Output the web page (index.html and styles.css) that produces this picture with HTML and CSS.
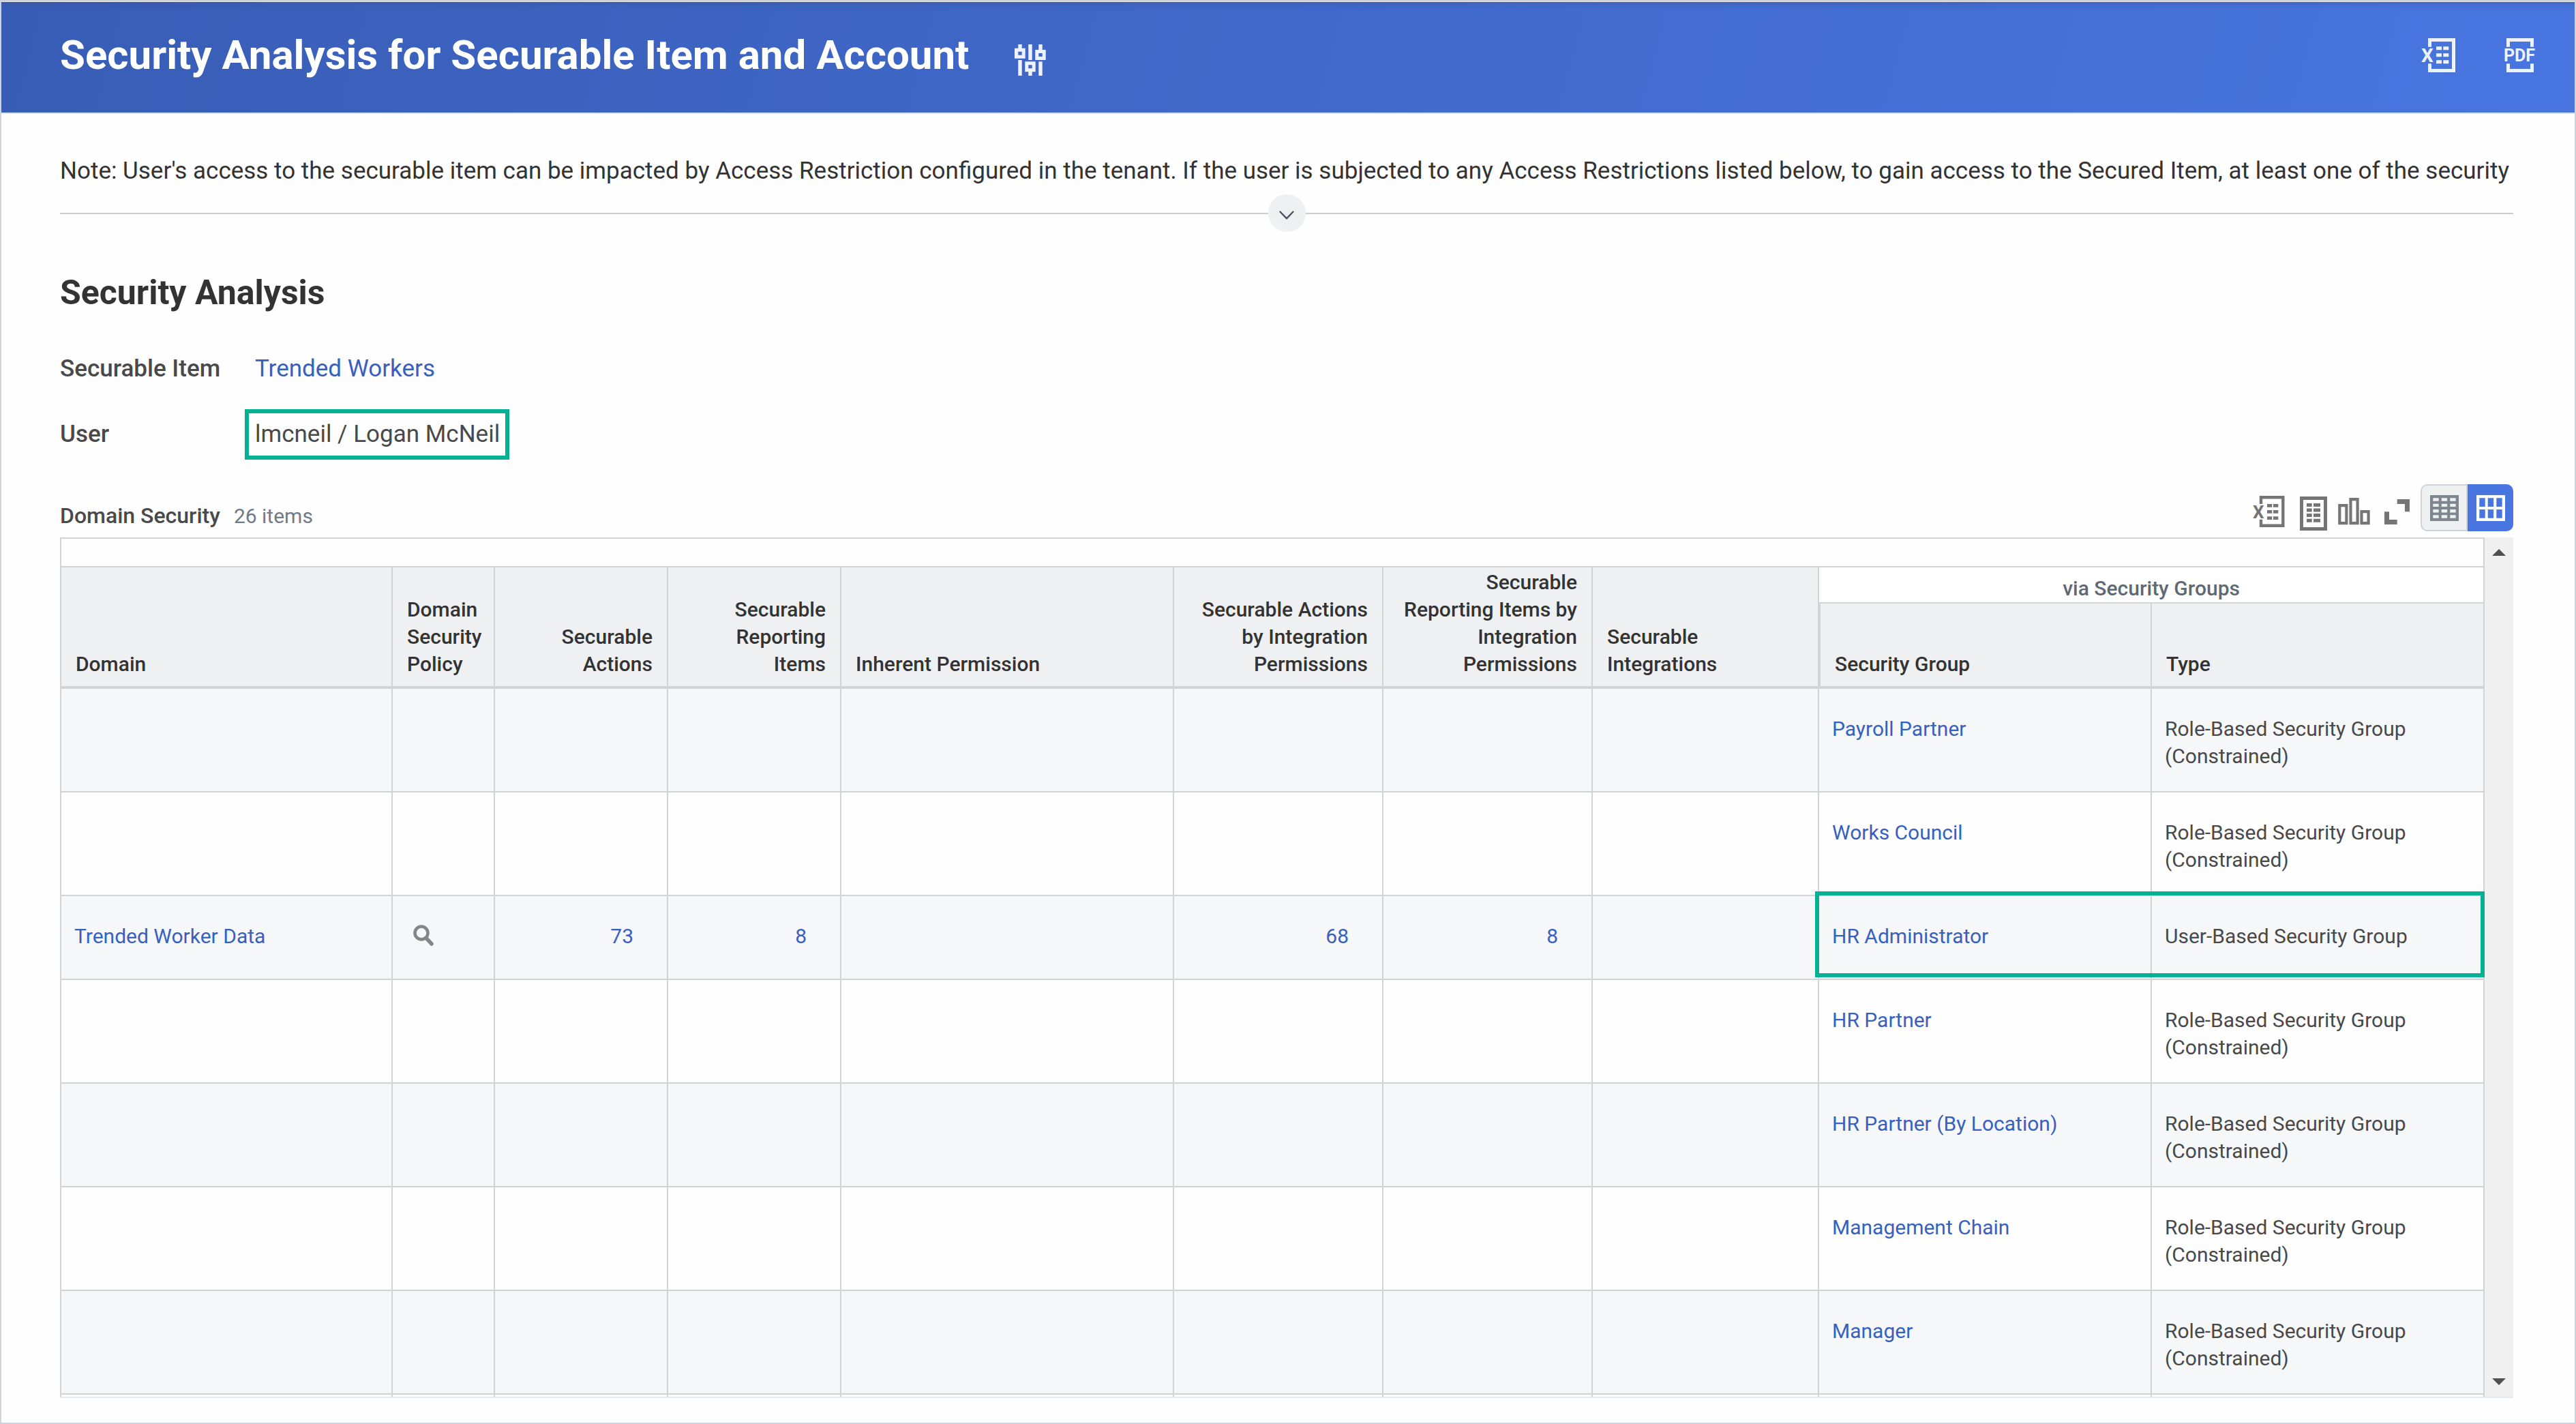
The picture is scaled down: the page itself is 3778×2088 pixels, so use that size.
FILE: index.html
```html
<!DOCTYPE html>
<html lang="en">
<head>
<meta charset="utf-8">
<title>Security Analysis for Securable Item and Account</title>
<link rel="stylesheet" href="styles.css">
</head>
<body>
<div class="page">
  <header class="page-header">
    <h1 class="page-title">Security Analysis for Securable Item and Account</h1>
    <button class="icon-button settings" type="button" aria-label="Configure">
      <svg width="46" height="46" viewBox="0 0 46 46" fill="currentColor" fill-rule="evenodd">
        <path d="M5.3 0h5.4v5.7h5v15H0v-15h5.300zM5.300 10.700v5h5.400v-5zM5.300 23h5.400v23H5.300z"/>
        <path d="M20.300 0h5.400v23h-5.400zM15.300 25.300h15.400v15h-5V46h-5.400v-5.700h-5zM20.300 30.300v5h5.400v-5z"/>
        <path d="M35.300 0h5.400v8h5v15H30.300V8h5zM35.300 13v5h5.400v-5zM35.300 25.300h5.400V46h-5.400z"/>
      </svg>
    </button>
    <div class="export-actions">
      <button class="icon-button" type="button" aria-label="Export to Excel">
        <svg width="50" height="50" viewBox="0 0 50 50" fill="currentColor">
          <path d="M12.500 12.700V2.500H47.500V47.500H12.500V37.300" fill="none" stroke="currentColor" stroke-width="5"/>
          <path d="M22 12.300h8v5h-8zM32.300 12.300h8v5h-8zM22 22.300h8v5h-8zM32.300 22.300h8v5h-8zM22 32.300h8v5h-8zM32.300 32.300h8v5h-8z"/>
          <text x="0" y="35" font-size="28" font-weight="700">X</text>
        </svg>
      </button>
      <button class="icon-button" type="button" aria-label="Export to PDF">
        <svg width="46" height="50" viewBox="0 0 46 50" fill="currentColor">
          <path d="M5.500 12.700V2.500H40.500V12.700M5.500 37.300V47.500H40.500V37.300" fill="none" stroke="currentColor" stroke-width="5"/>
          <text x="-1" y="34" font-size="25" font-weight="700">PDF</text>
        </svg>
      </button>
    </div>
  </header>

  <main class="content">
    <p class="note">Note: User's access to the securable item can be impacted by Access Restriction configured in the tenant. If the user is subjected to any Access Restrictions listed below, to gain access to the Secured Item, at least one of the security</p>
    <div class="expander">
      <button class="expand-button" type="button" aria-label="Show more">
        <svg width="22" height="13" viewBox="0 0 22 13" fill="none" stroke="currentColor" stroke-width="2.400" stroke-linecap="round" stroke-linejoin="round"><path d="M1.500 1.500 11 11.300 20.500 1.500"/></svg>
      </button>
    </div>

    <h2 class="section-title">Security Analysis</h2>
    <dl class="fields">
      <dt>Securable Item</dt>
      <dd><a class="field-value" href="#trended-workers">Trended Workers</a></dd>
      <dt>User</dt>
      <dd><span class="field-value marked">lmcneil / Logan McNeil</span></dd>
    </dl>

    <div class="grid-bar">
      <h3 class="grid-title" id="grid-title">Domain Security</h3>
      <span class="grid-count">26 items</span>
      <div class="tools">
        <button class="icon-button" type="button" aria-label="Export grid to Excel">
          <svg width="62" height="52" viewBox="0 0 62 52" fill="currentColor">
            <path d="M14 12V2.300H46.300V43.800H14V34.700" fill="none" stroke="currentColor" stroke-width="4.400"/>
            <path d="M23 12h7.300v4.700H23zM32 12h7.300v4.700H32zM23 21h7.300v4.700H23zM32 21h7.300v4.700H32zM23 30.300h7.300v4.700H23zM32 30.300h7.300v4.700H32z"/>
            <text x="2" y="33" font-size="26" font-weight="700">X</text>
          </svg>
        </button>
        <button class="icon-button" type="button" aria-label="View as worksheet">
          <svg width="62" height="52" viewBox="0 0 62 52" fill="currentColor">
            <path d="M11.500 3.500h35v45h-35z" fill="none" stroke="currentColor" stroke-width="5"/>
            <path d="M19 11h7.700v5H19zM29 11h10v5H29zM19 18.500h7.700v5H19zM29 18.500h10v5H29zM19 26h7.700v5H19zM29 26h10v5H29zM19 33.700h7.700v5H19zM29 33.700h10v5H29z"/>
          </svg>
        </button>
        <button class="icon-button" type="button" aria-label="View as chart">
          <svg width="62" height="52" viewBox="0 0 62 52" fill="none" stroke="currentColor" stroke-width="4.200">
            <path d="M5.300 14.100h10.100v26H5.300zM21.500 5.100h10.100v35H21.500zM37.500 23.100h10.100v17H37.500z"/>
          </svg>
        </button>
        <button class="icon-button" type="button" aria-label="Full screen">
          <svg width="62" height="52" viewBox="0 0 62 52" fill="currentColor">
            <path d="M27.700 5H46v18.300h-7V12H27.700zM9 23.300h7V35h11.700v7H9z"/>
          </svg>
        </button>
      </div>
      <div class="view-toggle">
        <button class="toggle" type="button" aria-label="Compact view" aria-pressed="false">
          <svg width="42" height="38" viewBox="0 0 42 38" fill="currentColor" fill-rule="evenodd">
            <path d="M0 0H42V38H0zM4.300 4.300v4.400h8.400V4.300zM16.700 4.300v4.400h8.400V4.300zM29.300 4.300v4.400h8.400V4.300zM4.300 12.700v4.400h8.400v-4.400zM16.700 12.700v4.400h8.400v-4.400zM29.300 12.700v4.400h8.400v-4.400zM4.300 21v4.400h8.400V21zM16.700 21v4.400h8.400V21zM29.300 21v4.400h8.400V21zM4.300 29.300v4.400h8.400v-4.400zM16.700 29.300v4.400h8.400v-4.400zM29.300 29.300v4.400h8.400v-4.400z"/>
          </svg>
        </button>
        <button class="toggle active" type="button" aria-label="Expanded view" aria-pressed="true">
          <svg width="42" height="38" viewBox="0 0 42 38" fill="currentColor" fill-rule="evenodd">
            <path d="M0 0H42V38H0zM4.300 4.300V17h8.400V4.300zM16.700 4.300V17h8.400V4.300zM29.300 4.300V17h8.400V4.300zM4.300 21v12.700h8.400V21zM16.700 21v12.700h8.400V21zM29.300 21v12.700h8.400V21z"/>
          </svg>
        </button>
      </div>
    </div>

    <div class="grid">
      <div class="grid-view">
        <table class="grid-table" aria-labelledby="grid-title">
          <colgroup>
            <col class="col-domain"><col class="col-policy"><col class="col-count"><col class="col-count"><col class="col-wide">
            <col class="col-perm"><col class="col-perm"><col class="col-integrations"><col class="col-wide"><col class="col-wide">
          </colgroup>
          <thead>
            <tr class="spacer"><td colspan="10"></td></tr>
            <tr class="group-row">
              <th rowspan="2" scope="col">Domain</th>
              <th rowspan="2" scope="col">Domain Security Policy</th>
              <th rowspan="2" scope="col" class="num">Securable Actions</th>
              <th rowspan="2" scope="col" class="num">Securable Reporting Items</th>
              <th rowspan="2" scope="col">Inherent Permission</th>
              <th rowspan="2" scope="col" class="num">Securable Actions by Integration Permissions</th>
              <th rowspan="2" scope="col" class="num">Securable Reporting Items by Integration Permissions</th>
              <th rowspan="2" scope="col">Securable Integrations</th>
              <th colspan="2" scope="colgroup" class="group">via Security Groups</th>
            </tr>
            <tr class="sub-row">
              <th scope="col" class="first-sub">Security Group</th>
              <th scope="col">Type</th>
            </tr>
          </thead>
          <tbody>
            <tr><td></td><td></td><td></td><td></td><td></td><td></td><td></td><td></td><td><a href="#payroll-partner">Payroll Partner</a></td><td>Role-Based Security Group (Constrained)</td></tr>
            <tr><td></td><td></td><td></td><td></td><td></td><td></td><td></td><td></td><td><a href="#works-council">Works Council</a></td><td>Role-Based Security Group (Constrained)</td></tr>
            <tr class="single">
              <td><a href="#trended-worker-data">Trended Worker Data</a></td>
              <td>
                <button class="icon-button lookup" type="button" aria-label="View policy">
                  <svg width="30" height="32" viewBox="0 0 30 32" fill="none" stroke="currentColor"><circle cx="12" cy="12" r="9.500" stroke-width="4.600"/><path d="M19 19.500 27 28" stroke-width="5.500" stroke-linecap="round"/></svg>
                </button>
              </td>
              <td class="num"><a href="#actions">73</a></td>
              <td class="num"><a href="#reporting-items">8</a></td>
              <td></td>
              <td class="num"><a href="#integration-actions">68</a></td>
              <td class="num"><a href="#integration-items">8</a></td>
              <td></td>
              <td class="mark-start"><a href="#hr-administrator">HR Administrator</a></td>
              <td class="mark-end">User-Based Security Group</td>
            </tr>
            <tr><td></td><td></td><td></td><td></td><td></td><td></td><td></td><td></td><td><a href="#hr-partner">HR Partner</a></td><td>Role-Based Security Group (Constrained)</td></tr>
            <tr><td></td><td></td><td></td><td></td><td></td><td></td><td></td><td></td><td><a href="#hr-partner-location">HR Partner (By Location)</a></td><td>Role-Based Security Group (Constrained)</td></tr>
            <tr><td></td><td></td><td></td><td></td><td></td><td></td><td></td><td></td><td><a href="#management-chain">Management Chain</a></td><td>Role-Based Security Group (Constrained)</td></tr>
            <tr><td></td><td></td><td></td><td></td><td></td><td></td><td></td><td></td><td><a href="#manager">Manager</a></td><td>Role-Based Security Group (Constrained)</td></tr>
            <tr><td></td><td></td><td></td><td></td><td></td><td></td><td></td><td></td><td></td><td></td></tr>
          </tbody>
        </table>
      </div>
      <div class="scrollbar">
        <button class="scroll-button" type="button" aria-label="Scroll up"><svg width="20" height="10" viewBox="0 0 20 10" fill="currentColor"><path d="M10 0 20 10H0z"/></svg></button>
        <button class="scroll-button" type="button" aria-label="Scroll down"><svg width="20" height="10" viewBox="0 0 20 10" fill="currentColor"><path d="M0 0H20L10 10z"/></svg></button>
      </div>
    </div>
  </main>
</div>
</body>
</html>
```
FILE: styles.css
```css
* { box-sizing: border-box; }

body {
  margin: 0;
  font-family: Roboto, "Liberation Sans", sans-serif;
  font-size: 35px;
  line-height: 42px;
  color: #494949;
  background: #fefefe;
}

h1, h2, h3, p, dl, dd { margin: 0; }

a { color: #3860be; text-decoration: none; }

button {
  margin: 0;
  padding: 0;
  border: 0;
  background: none;
  font: inherit;
  color: inherit;
  cursor: pointer;
}

svg { display: block; overflow: visible; }

.page {
  display: flex;
  flex-direction: column;
  height: 100vh;
  border: 2px solid #ced3db;
}

.page-header {
  display: flex;
  align-items: center;
  flex: none;
  height: 165px;
  padding: 0 57px 6px 86px;
  border-top: 1px solid #e3e1e8;
  border-bottom: 2px solid #dfe1ea;
  background: linear-gradient(105deg, #385db6, #4875e0);
  background-clip: padding-box;
  box-shadow: inset 0 12px 10px -10px rgba(60, 80, 140, 0.5);
  color: #fff;
}

.page-title {
  font-size: 60px;
  line-height: 70px;
  font-weight: 700;
}

.settings { margin: 14px 0 0 67px; }

.page-header .icon-button { color: #eef2fd; }

.export-actions {
  display: flex;
  gap: 72px;
  margin-left: auto;
}

.content {
  display: flex;
  flex-direction: column;
  flex: 1;
  min-height: 0;
  padding: 63px 90px 36px 86px;
}

.note { color: #333; white-space: nowrap; }

.expander {
  display: flex;
  align-items: center;
  margin-top: 13px;
}

.expander::before,
.expander::after {
  content: "";
  flex: 1;
  height: 2px;
  background: #cbcbd1;
}

.expand-button {
  display: flex;
  align-items: center;
  justify-content: center;
  width: 55px;
  height: 55px;
  padding-top: 6px;
  border-radius: 50%;
  background: #eff0f2;
  color: #4a5260;
}

.section-title {
  margin-top: 59px;
  font-size: 50px;
  line-height: 60px;
  font-weight: 700;
  color: #333;
}

.fields {
  display: grid;
  grid-template-columns: 271px auto;
  align-items: center;
  row-gap: 38px;
  margin-top: 61px;
}

.fields dt { font-weight: 500; }

.field-value { display: inline-block; padding-left: 15px; vertical-align: top; }

.marked {
  padding: 10px 8px 10px 9px;
  border: 6px solid #06b092;
}

.grid-bar {
  display: flex;
  align-items: flex-end;
  height: 69px;
  margin: 36px 0 9px;
}

.grid-title {
  padding-bottom: 2px;
  font-size: 32px;
  font-weight: 500;
}

.grid-count {
  margin-left: 20px;
  padding-bottom: 1px;
  font-size: 30px;
  color: #6f7b88;
}

.tools {
  display: flex;
  margin-left: auto;
  color: #757575;
}

.view-toggle { display: flex; }

.toggle {
  display: flex;
  align-items: center;
  justify-content: center;
  width: 69px;
  height: 69px;
  border: 2px solid #ced3d9;
  border-radius: 10px 0 0 10px;
  background: #eff0f2;
  color: #808690;
}

.toggle.active {
  width: 67px;
  border: 0;
  border-radius: 0 10px 10px 0;
  background: #4875e0;
  color: #fff;
}

.grid {
  display: flex;
  flex: 1;
  min-height: 0;
  border-bottom: 2px solid #e4e9ee;
}

.grid-view {
  flex: 1;
  min-width: 0;
  overflow: hidden;
  border: solid #d3d3d3;
  border-width: 2px 0 0 2px;
}

.grid-table {
  width: 100%;
  table-layout: fixed;
  border-collapse: separate;
  border-spacing: 0;
  font-size: 30px;
  line-height: 40px;
}

.col-domain { width: 486px; }
.col-wide { width: 488px; }
.col-policy { width: 150px; }
.col-count { width: 254px; }
.col-perm { width: 307px; }
.col-integrations { width: 332px; }

.grid-table th,
.grid-table td {
  border: solid #d3d3d3;
  border-width: 0 2px 2px 0;
  text-align: left;
}

.grid-table th {
  padding: 0 21px 12px;
  border-bottom-width: 4px;
  background: #eff0f2;
  color: #333;
  font-weight: 500;
  vertical-align: bottom;
}

.grid-table .num { text-align: right; }

.spacer td { height: 42px; }

.grid-table th.group {
  height: 53px;
  padding: 10px 0 0;
  border-bottom-width: 2px;
  background: #fff;
  color: #5f6875;
  text-align: center;
  vertical-align: middle;
}

.sub-row th { height: 125px; }

.grid-table th.first-sub { border-left-width: 2px; }

.grid-table tbody td {
  height: 152px;
  padding: 39px 19px 29px;
  vertical-align: top;
}

.grid-table tbody tr:nth-child(odd) { background: #f5f7f9; }

.grid-table tbody .single td { height: 123px; }

.grid-table tbody td.num { padding-right: 49px; }

.lookup { margin: 3px 11px 0; color: #858585; }

/* Outline that spans the security group and type cells */
.mark-start,
.mark-end { position: relative; }

.mark-start::after,
.mark-end::after {
  content: "";
  position: absolute;
  top: -7px;
  right: -2px;
  bottom: 2px;
  left: 0;
  border: 6px solid #06b092;
  pointer-events: none;
}

.mark-start::after { left: -6px; border-right: 0; }
.mark-end::after { border-left: 0; }

.scrollbar {
  display: flex;
  flex: none;
  flex-direction: column;
  justify-content: space-between;
  align-items: center;
  width: 42px;
  padding: 17px 0;
  background: #f0f0f0;
  color: #505050;
}
```
